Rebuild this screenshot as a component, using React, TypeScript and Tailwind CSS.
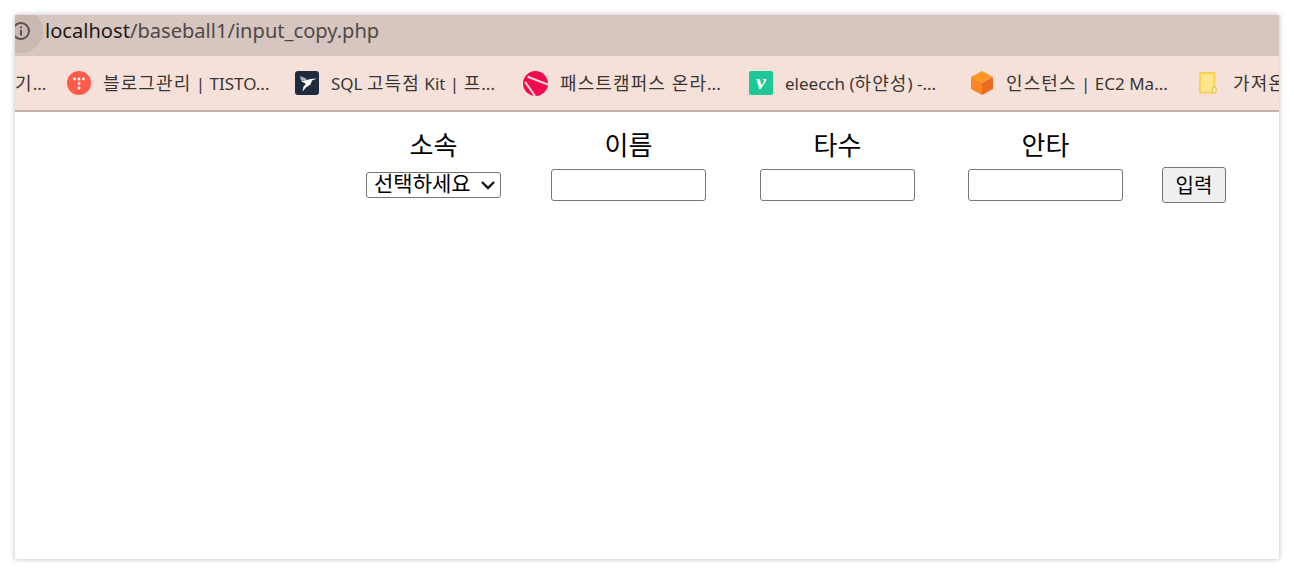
const font = { fontFamily: '"Noto Sans", "Noto Sans CJK KR", sans-serif' };

function Tistory() {
  return (
    <svg width="24" height="24" viewBox="0 0 24 24" className="shrink-0">
      <circle cx="12" cy="12" r="12" fill="#ff5a4a" />
      <g fill="#fff">
        <circle cx="7.5" cy="8" r="1.4" />
        <circle cx="12" cy="8" r="1.4" />
        <circle cx="16.5" cy="8" r="1.4" />
        <circle cx="12" cy="12.5" r="1.4" />
        <circle cx="12" cy="17" r="1.4" />
      </g>
    </svg>
  );
}

function Bird() {
  return (
    <svg width="24" height="24" viewBox="0 0 24 24" className="shrink-0">
      <rect width="24" height="24" rx="3" fill="#1e2a3e" />
      <path d="M5 5 L10 7 L12 9 L6 9.5 Z" fill="#aeb4bd" />
      <path d="M6 10 L12 9 L15.5 8 L22 7.5 L17 9.5 L15.5 13.5 L11.5 16 L7.5 20.5 L8.5 15.5 L11 13 Z" fill="#fff" />
    </svg>
  );
}

function FastCampus() {
  return (
    <svg width="25" height="25" viewBox="0 0 24 24" className="shrink-0">
      <circle cx="12" cy="12" r="12" fill="#f5084f" />
      <path d="M4.5 5.5 L24 13 M2 10.5 L11.5 24" stroke="#f8dcd6" strokeWidth="2" fill="none" />
    </svg>
  );
}

function Cube() {
  return (
    <svg width="24" height="26" viewBox="0 0 24 26" className="shrink-0">
      <path d="M12 1 L23 7 L12 13 L1 7 Z" fill="#fd9526" />
      <path d="M1 7 L12 13 L12 25 L1 19 Z" fill="#fb8423" />
      <path d="M23 7 L12 13 L12 25 L23 19 Z" fill="#ec6a22" />
    </svg>
  );
}

function FileIcon() {
  return (
    <svg width="18" height="22" viewBox="0 0 18 22" className="shrink-0">
      <path d="M1.5 1 H15.5 V20.5 H1 V1.5 Z" fill="#ffe58f" stroke="#f6d24e" strokeWidth="1.8" />
      <rect x="13.5" y="15" width="3.5" height="6" rx="1.5" fill="#fff6d8" stroke="#eebf3a" strokeWidth="1.2" />
    </svg>
  );
}

function K({ children }: { children: React.ReactNode }) {
  return <span className="text-[18px] tracking-[1.1px]">{children}</span>;
}

function Bookmark({ icon, children, width }: { icon: React.ReactNode; children: React.ReactNode; width: string }) {
  return (
    <div className="flex items-center shrink-0">
      {icon}
      <span className={`${width} ml-3 shrink-0 whitespace-nowrap overflow-hidden text-[17px] text-[#3b3532]`}>{children}</span>
    </div>
  );
}

function Column({ title, children, className }: { title: string; children: React.ReactNode; className: string }) {
  return (
    <div className={`flex flex-col items-center ${className}`}>
      <div className="h-[26px] leading-[26px] text-[26px] text-black whitespace-nowrap">{title}</div>
      {children}
    </div>
  );
}

const inputCls = "w-[155px] h-[32px] mt-[11px] border border-[#767676] rounded-[3px] bg-white";

export default function App() {
  return (
    <div className="w-[1294px] h-[574px] bg-white p-[15px] overflow-hidden" style={font}>
      <div className="w-[1264px] h-[544px] bg-white flex flex-col overflow-hidden shadow-[0_0_5px_rgba(0,0,0,0.28)]">
        <div className="h-[41px] shrink-0 bg-[#d6c6bf] flex items-start overflow-hidden">
          <div className="-ml-[16px] -mt-[6px] w-[44px] h-[44px] rounded-full bg-[#c9b9b2] shrink-0 flex items-center justify-center">
            <svg width="20" height="20" viewBox="0 0 20 20" fill="none">
              <circle cx="10" cy="10" r="8" stroke="#5a514d" strokeWidth="2" />
              <rect x="9" y="9" width="2" height="5.5" fill="#5a514d" />
              <rect x="9" y="5.5" width="2" height="2" fill="#5a514d" />
            </svg>
          </div>
          <div className="ml-[2px] h-[32px] leading-[32px] text-[20.1px] whitespace-nowrap text-[#4e4a48]">
            <span className="text-[#1d1a19]">localhost</span>/baseball1/input_copy.php
          </div>
        </div>
        <div className="h-[56px] shrink-0 bg-[#f5e1da] border-b-2 border-[#c4b3ad] flex items-center overflow-hidden whitespace-nowrap">
          <div className="w-[52px] shrink-0 text-[17px] text-[#3b3532]"><K>기</K>...</div>
          <div className="flex items-center gap-[24px]">
            <Bookmark icon={<Tistory />} width="w-[168px]"><K>블로그관리</K> | TISTO...</Bookmark>
            <Bookmark icon={<Bird />} width="w-[168px]">SQL <K>고득점</K> Kit | <K>프</K>...</Bookmark>
            <Bookmark icon={<FastCampus />} width="w-[165px]"><K>패스트캠퍼스 온라</K>...</Bookmark>
            <Bookmark
              icon={
                <div className="w-[24px] h-[24px] shrink-0 rounded-[2px] bg-[#1fc997] flex items-center justify-center text-white font-bold italic text-[22px] leading-none pb-[3px]" style={{ fontFamily: '"Liberation Serif", serif' }}>
                  v
                </div>
              }
              width="w-[161px]"
            >
              eleecch (<K>하얀성</K>) -...
            </Bookmark>
            <Bookmark icon={<Cube />} width="w-[167px]"><K>인스턴스</K> | EC2 Ma...</Bookmark>
            <Bookmark icon={<div className="ml-[2px] mr-[4px]"><FileIcon /></div>} width="w-[120px]"><K>가져온 북마크</K></Bookmark>
          </div>
        </div>
        <div className="flex justify-end items-start pt-[20px] pr-[53px]">
          <Column title="소속" className="w-[135px]">
            <div className="relative w-[135px] h-[26px] mt-[14px]">
              <select className="appearance-none block w-full h-full pl-[7px] pb-[3px] text-[21px] leading-none border border-[#767676] rounded-[3px] bg-white text-black outline-none" defaultValue="a" style={font}>
                <option value="a">선택하세요</option>
              </select>
              <svg width="16" height="10" viewBox="0 0 16 10" fill="none" className="absolute right-[5px] top-[8px] pointer-events-none">
                <path d="M2 2 L8 8 L14 2" stroke="#111" strokeWidth="2.4" />
              </svg>
            </div>
          </Column>
          <Column title="이름" className="w-[155px] ml-[50px]">
            <input className={inputCls} />
          </Column>
          <Column title="타수" className="w-[155px] ml-[54px]">
            <input className={inputCls} />
          </Column>
          <Column title="안타" className="w-[155px] ml-[53px]">
            <input className={inputCls} />
          </Column>
          <button className="w-[64px] h-[36px] mt-[35px] ml-[39px] pt-[1px] text-[20px] leading-none border border-[#767676] rounded-[3px] bg-[#efefef] text-black">
            입력
          </button>
        </div>
      </div>
    </div>
  );
}
